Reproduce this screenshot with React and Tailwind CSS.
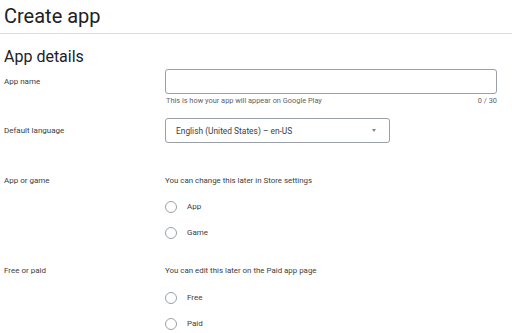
export default function App() {
  // radio rows used by the two choice groups
  const Radio = ({ label }) => (
    <div className="flex items-center h-[26px]">
      <span className="w-[12px] h-[12px] rounded-full border-[1.5px] border-[#9aa0a6]" />
      <span className="ml-[10px] text-[8px] leading-[12px] text-[#3c4043]">{label}</span>
    </div>
  );

  return (
    <div className="w-[512px] h-[333px] overflow-hidden bg-white font-['Roboto',sans-serif] text-[#202124]">
      <h1 className="px-1 pt-[4px] h-[33px] text-[20px] leading-[24px]">Create app</h1>
      <div className="border-t border-[#dadce0]" />
      <h2 className="px-1 mt-[13px] text-[16px] leading-[20px]">App details</h2>

      <div className="px-1 mt-[2px]">
        {/* App name */}
        <div className="flex">
          <div className="w-[161px] pt-[6.5px] text-[8px] leading-[12px] text-[#3c4043]">App name</div>
          <div className="w-[332px]">
            <div className="h-[25px] rounded-[3px] border border-[#9aa0a6]" />
            <div className="mt-[1px] flex justify-between text-[7.4px] leading-[11px] text-[#5f6368] pl-px">
              <span>This is how your app will appear on Google Play</span>
              <span>0 / 30</span>
            </div>
          </div>
        </div>

        {/* Default language */}
        <div className="flex mt-[12px]">
          <div className="w-[161px] pt-[6.5px] text-[8px] leading-[12px] text-[#3c4043]">Default language</div>
          <div className="w-[225px] h-[25px] rounded-[3px] border border-[#9aa0a6] flex items-center justify-between pl-[10px] pr-[13px]">
            <span className="text-[8.4px] leading-[12px] text-[#3c4043]">English (United States) – en-US</span>
            <span className="w-0 h-0 border-l-[2.5px] border-r-[2.5px] border-t-[3px] border-l-transparent border-r-transparent border-t-[#80868b]" />
          </div>
        </div>

        {/* App or game */}
        <div className="flex mt-[32px]">
          <div className="w-[161px] text-[8px] leading-[12px] text-[#3c4043]">App or game</div>
          <div>
            <div className="text-[7.9px] leading-[12px] text-[#3c4043]">You can change this later in Store settings</div>
            <div className="mt-[7px]">
              <Radio label="App" />
              <Radio label="Game" />
            </div>
          </div>
        </div>

        {/* Free or paid */}
        <div className="flex mt-[19px]">
          <div className="w-[161px] text-[8px] leading-[12px] text-[#3c4043]">Free or paid</div>
          <div>
            <div className="text-[7.9px] leading-[12px] text-[#3c4043]">You can edit this later on the Paid app page</div>
            <div className="mt-[8px]">
              <Radio label="Free" />
              <Radio label="Paid" />
            </div>
          </div>
        </div>
      </div>
    </div>
  );
}
